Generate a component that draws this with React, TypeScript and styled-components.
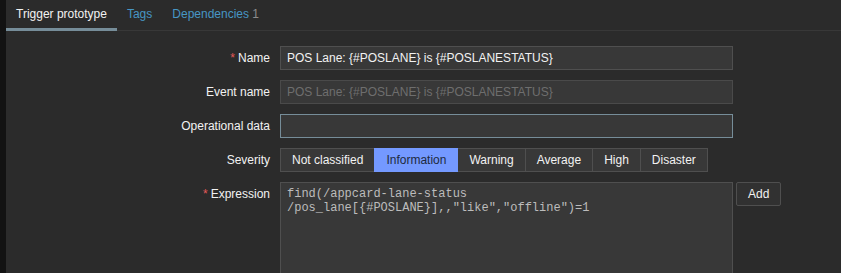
import React from "react";
import styled, { createGlobalStyle } from "styled-components";

const GlobalStyle = createGlobalStyle`
  html, body {
    margin: 0;
    padding: 0;
    background: #2b2b2b;
    overflow: hidden;
  }
  body {
    font-family: "Liberation Sans", Arial, sans-serif;
    font-size: 12px;
    color: #f2f2f2;
  }
`;

const Page = styled.div`
  display: flex;
  width: 841px;
  height: 273px;
  background: #2b2b2b;
  overflow: hidden;
`;

const SideStrip = styled.div`
  width: 6px;
  flex-shrink: 0;
  background: #121212;
`;

const Main = styled.div`
  flex: 1;
  display: flex;
  flex-direction: column;
`;

const TabBar = styled.div`
  display: flex;
  height: 31px;
  box-sizing: border-box;
  border-bottom: 1px solid #383838;
`;

const Tab = styled.div<{ $active?: boolean }>`
  padding: 1px 10px 0;
  height: 31px;
  box-sizing: border-box;
  line-height: 27px;
  margin-bottom: -1px;
  border-bottom: 3px solid ${(p) => (p.$active ? "#768d99" : "transparent")};
  color: ${(p) => (p.$active ? "#f2f2f2" : "#4796c4")};
  cursor: pointer;
  white-space: nowrap;
`;

const Count = styled.span`
  color: #8c8c8c;
`;

const Form = styled.div`
  display: grid;
  grid-template-columns: 264px 1fr;
  column-gap: 10px;
  row-gap: 10px;
  padding-top: 15px;
`;

const Label = styled.label`
  text-align: right;
  line-height: 24px;
  color: #f2f2f2;
  white-space: nowrap;
`;

const Required = styled.span`
  color: #e45959;
  margin-right: 3px;
`;

const Field = styled.div`
  display: flex;
  align-items: flex-start;
  gap: 3px;
`;

const TextInput = styled.input<{ $focused?: boolean }>`
  width: 453px;
  height: 24px;
  box-sizing: border-box;
  margin: 0;
  padding: 0 6px;
  background: #383838;
  border: 1px solid ${(p) => (p.$focused ? "#768d99" : "#4f4f4f")};
  color: #f2f2f2;
  font-family: "Liberation Sans", Arial, sans-serif;
  font-size: 12px;
  outline: none;
  &:disabled {
    color: #6e6e6e;
    background: #383838;
    border-color: #4a4a4a;
  }
`;

const RadioGroup = styled.div`
  display: flex;
`;

const RadioButton = styled.button<{ $selected?: boolean }>`
  height: 24px;
  box-sizing: border-box;
  margin: 0 0 0 -1px;
  padding: 0 11px;
  background: ${(p) => (p.$selected ? "#7499ff" : "#383838")};
  border: 1px solid ${(p) => (p.$selected ? "#7499ff" : "#4f4f4f")};
  color: ${(p) => (p.$selected ? "#1e2a40" : "#f2f2f2")};
  font-family: "Liberation Sans", Arial, sans-serif;
  font-size: 12px;
  cursor: pointer;
  white-space: nowrap;
  position: relative;
  z-index: ${(p) => (p.$selected ? 1 : 0)};
  &:first-child {
    margin-left: 0;
  }
`;

const TextArea = styled.textarea`
  width: 453px;
  height: 130px;
  box-sizing: border-box;
  margin: 0;
  padding: 4px 6px;
  background: #383838;
  border: 1px solid #4f4f4f;
  color: #bcbcbc;
  font-family: "Liberation Mono", "Courier New", monospace;
  font-size: 12px;
  line-height: 14px;
  resize: none;
  outline: none;
`;

const Button = styled.button`
  height: 24px;
  box-sizing: border-box;
  margin: 0;
  padding: 0 11px;
  background: #313131;
  border: 1px solid #4f4f4f;
  border-radius: 2px;
  color: #f2f2f2;
  font-family: "Liberation Sans", Arial, sans-serif;
  font-size: 12px;
  cursor: pointer;
`;

const severities = [
  "Not classified",
  "Information",
  "Warning",
  "Average",
  "High",
  "Disaster",
];

export default function App() {
  return (
    <>
      <GlobalStyle />
      <Page>
        <SideStrip />
        <Main>
          <TabBar>
            <Tab $active>Trigger prototype</Tab>
            <Tab>Tags</Tab>
            <Tab>
              Dependencies <Count>1</Count>
            </Tab>
          </TabBar>
          <Form>
            <Label>
              <Required>*</Required>Name
            </Label>
            <Field>
              <TextInput
                defaultValue="POS Lane: {#POSLANE} is {#POSLANESTATUS}"
              />
            </Field>

            <Label>Event name</Label>
            <Field>
              <TextInput
                disabled
                defaultValue="POS Lane: {#POSLANE} is {#POSLANESTATUS}"
              />
            </Field>

            <Label>Operational data</Label>
            <Field>
              <TextInput $focused defaultValue="" />
            </Field>

            <Label>Severity</Label>
            <Field>
              <RadioGroup>
                {severities.map((s) => (
                  <RadioButton key={s} $selected={s === "Information"}>
                    {s}
                  </RadioButton>
                ))}
              </RadioGroup>
            </Field>

            <Label>
              <Required>*</Required>Expression
            </Label>
            <Field>
              <TextArea
                spellCheck={false}
                defaultValue={
                  'find(/appcard-lane-status\n/pos_lane[{#POSLANE}],,"like","offline")=1'
                }
              />
              <Button>Add</Button>
            </Field>
          </Form>
        </Main>
      </Page>
    </>
  );
}
